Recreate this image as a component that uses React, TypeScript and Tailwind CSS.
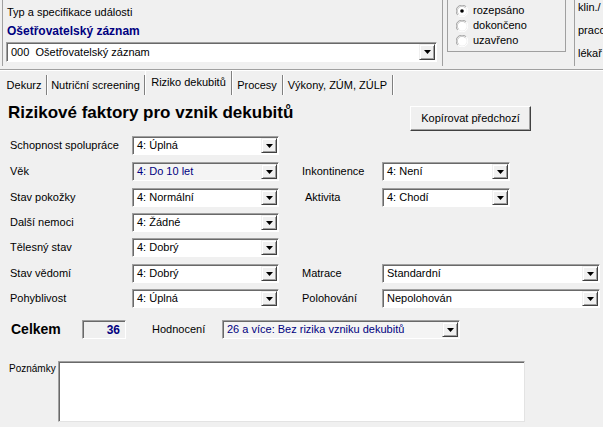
import React from "react";

type Row = {
  h: string;
  label: string;
  value: string;
  gray?: boolean;
  right?: { label: string; value: string; wide?: boolean; indent?: boolean };
};

const rows: Row[] = [
  { h: "h-[26px]", label: "Schopnost spolupráce", value: "4: Úplná" },
  {
    h: "h-[26px]",
    label: "Věk",
    value: "4: Do 10 let",
    gray: true,
    right: { label: "Inkontinence", value: "4: Není" },
  },
  {
    h: "h-[25px]",
    label: "Stav pokožky",
    value: "4: Normální",
    right: { label: "Aktivita", value: "4: Chodí", indent: true },
  },
  { h: "h-[25px]", label: "Další nemoci", value: "4: Žádné" },
  { h: "h-[26px]", label: "Tělesný stav", value: "4: Dobrý" },
  {
    h: "h-[25px]",
    label: "Stav vědomí",
    value: "4: Dobrý",
    right: { label: "Matrace", value: "Standardní", wide: true },
  },
  {
    h: "h-[25px]",
    label: "Pohyblivost",
    value: "4: Úplná",
    right: { label: "Polohování", value: "Nepolohován", wide: true },
  },
];

const tabs = [
  { name: "Dekurz", w: "w-[45px]" },
  { name: "Nutriční screening", w: "w-[98px]" },
  { name: "Riziko dekubitů", w: "w-[87px]", active: true },
  { name: "Procesy", w: "w-[51px]" },
  { name: "Výkony, ZÚM, ZÚLP", w: "w-[110px]" },
];

const Arrow = () => (
  <div className="flex h-full w-[16px] shrink-0 items-center justify-center border border-t-[#f0f0f0] border-l-[#f0f0f0] border-r-[#404040] border-b-[#404040] bg-[#f0f0f0] shadow-[inset_1px_1px_0_#ffffff,inset_-1px_-1px_0_#a0a0a0]">
    <svg width="7" height="4" viewBox="0 0 7 4">
      <path d="M0 0h7L3.5 4z" fill="#000" />
    </svg>
  </div>
);

const Combo = ({
  value,
  className,
  gray,
}: {
  value: string;
  className: string;
  gray?: boolean;
}) => (
  <div
    className={`flex h-[19px] shrink-0 border border-t-[#a0a0a0] border-l-[#a0a0a0] border-r-[#ffffff] border-b-[#ffffff] ${className}`}
  >
    <div
      className={`flex min-w-0 flex-1 items-center p-px shadow-[inset_1px_1px_0_#696969] ${
        gray ? "bg-[#f4f4f4] text-[#000080]" : "bg-white text-black"
      }`}
    >
      <span className="flex-1 truncate whitespace-pre pl-[3px] leading-[15px]">{value}</span>
      <Arrow />
    </div>
  </div>
);

const Radio = ({ checked }: { checked?: boolean }) => (
  <svg width="12" height="12" viewBox="0 0 12 12">
    <path d="M10.2 1.8A5.5 5.5 0 0 0 1.8 10.2" stroke="#a0a0a0" fill="none" />
    <path d="M1.8 10.2A5.5 5.5 0 0 0 10.2 1.8" stroke="#ffffff" fill="none" />
    <circle cx="6" cy="6" r="4.6" fill="#ffffff" />
    <path d="M9.3 2.7A4.6 4.6 0 0 0 2.7 9.3" stroke="#c8c8c8" fill="none" />
    {checked && <circle cx="6" cy="6" r="1.8" fill="#000" />}
  </svg>
);

export default function App() {
  return (
    <div className="h-[427px] w-[603px] overflow-hidden bg-[#f0f0f0] font-['Liberation_Sans',Arial,sans-serif] text-[11px] text-black">
      {/* header */}
      <div className="flex h-[69px]">
        <div className="w-[443px] shrink-0 pl-[2px]">
          <div className="flex h-[66px] flex-col border-l border-r border-l-[#a0a0a0] border-r-[#a0a0a0] pl-[4px] pr-[5px]">
            <div className="mt-[5px] leading-[14px]">Typ a specifikace události</div>
            <div className="mt-[4px] text-[12px] font-bold leading-[16px] text-[#000080]">
              Ošetřovatelský záznam
            </div>
            <Combo value="000  Ošetřovatelský záznam" className="mt-[3px] h-[20px] w-[431px] -ml-[1px]" />
          </div>
        </div>
        <div className="ml-[4px] flex h-[52px] w-[119px] shrink-0 flex-col border border-t-0 border-[#a0a0a0] pl-[8px] pt-[3px]">
          {[
            { t: "rozepsáno", c: true },
            { t: "dokončeno" },
            { t: "uzavřeno" },
          ].map((r) => (
            <div key={r.t} className="flex h-[15px] items-center gap-[5px]">
              <Radio checked={r.c} />
              <span>{r.t}</span>
            </div>
          ))}
        </div>
        <div className="ml-[8px] h-[66px] min-w-0 flex-1 overflow-hidden border-l border-[#a0a0a0] pl-[3px]">
          <div className="whitespace-nowrap leading-[14px]">klin./</div>
          <div className="mt-[9px] whitespace-nowrap leading-[14px]">praco</div>
          <div className="mt-[9px] whitespace-nowrap leading-[14px]">lékař</div>
        </div>
      </div>
      <div className="h-[2px] border-t border-b border-t-[#a0a0a0] border-b-white" />

      {/* tabs */}
      <div className="flex h-[24px] pl-[2px]">
        {tabs.map((t) => (
          <div
            key={t.name}
            className={`flex shrink-0 justify-center border-r border-[#808080] shadow-[1px_0_0_#ffffff] ${t.w} ${
              t.active
                ? "items-start border-l border-l-white pt-[4px]"
                : "mt-[4px] items-end pb-[2px]"
            }`}
          >
            <span className="whitespace-nowrap leading-[15px]">{t.name}</span>
          </div>
        ))}
      </div>

      {/* content */}
      <div className="pt-[9px]">
        <div className="flex items-start">
          <div className="w-[410px] shrink-0 pl-[8px] text-[17px] font-bold leading-[18px]">
            Rizikové faktory pro vznik dekubitů
          </div>
          <button className="mt-[2px] flex h-[25px] w-[121px] items-center justify-center border border-t-white border-l-white border-r-[#404040] border-b-[#404040] bg-[#f0f0f0] text-[11px] shadow-[inset_-1px_-1px_0_#a0a0a0]">
            Kopírovat předchozí
          </button>
        </div>

        <div className="mt-[5px] flex flex-col">
          {rows.map((r) => (
            <div key={r.label} className={`flex items-start ${r.h}`}>
              <div className="w-[132px] shrink-0 pl-[10px] leading-[19px]">{r.label}</div>
              <Combo value={r.value} gray={r.gray} className="w-[147px]" />
              {r.right && (
                <>
                  <div
                    className={`w-[103px] shrink-0 leading-[19px] ${
                      r.right.indent ? "pl-[26px]" : "pl-[23px]"
                    }`}
                  >
                    {r.right.label}
                  </div>
                  <Combo
                    value={r.right.value}
                    className={r.right.wide ? "w-[218px]" : "w-[128px]"}
                  />
                </>
              )}
            </div>
          ))}
        </div>

        <div className="mt-[6px] flex items-center">
          <div className="w-[82px] shrink-0 pl-[11px] text-[14px] font-bold leading-[19px]">Celkem</div>
          <div className="flex h-[19px] w-[44px] shrink-0 items-center justify-end border border-t-[#a0a0a0] border-l-[#a0a0a0] border-r-white border-b-white pr-[5px] text-[12px] font-bold text-[#000080] shadow-[inset_1px_1px_0_#696969]">
            36
          </div>
          <div className="w-[96px] shrink-0 pl-[26px] leading-[19px]">Hodnocení</div>
          <Combo value="26 a více: Bez rizika vzniku dekubitů" gray className="w-[238px]" />
        </div>

        <div className="mt-[22px] flex items-start">
          <div className="w-[58px] shrink-0 whitespace-nowrap pl-[9px] pt-[1px] text-[10px] leading-[14px]">
            Poznámky
          </div>
          <div className="h-[61px] w-[467px] shrink-0 border border-t-[#a0a0a0] border-l-[#a0a0a0] border-r-[#e3e3e3] border-b-[#e3e3e3] bg-white shadow-[inset_1px_1px_0_#696969]" />
        </div>
      </div>
    </div>
  );
}
